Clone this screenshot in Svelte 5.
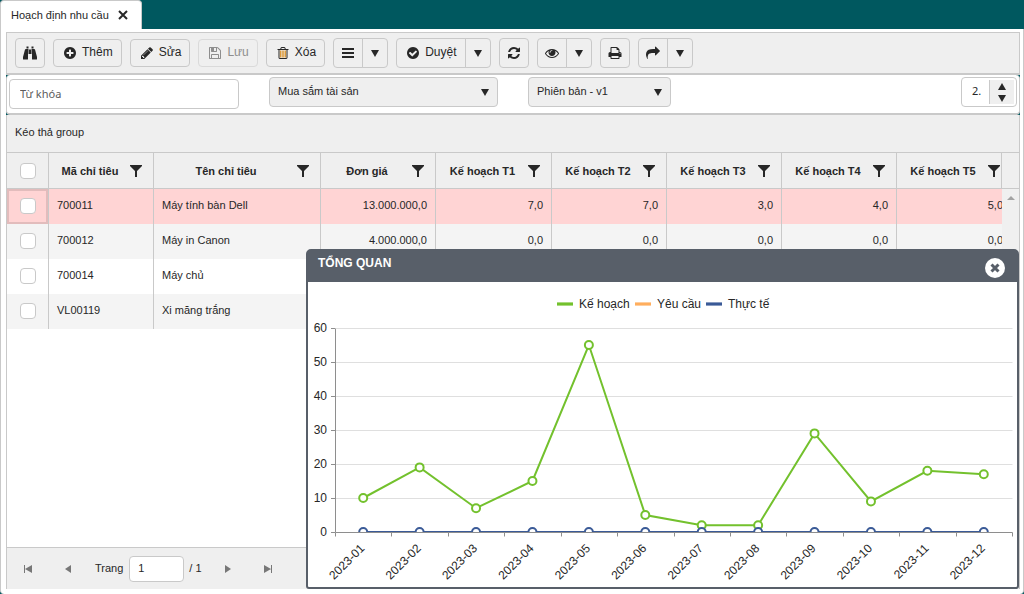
<script lang="ts">
  const icons: Record<string, string> = {
    plus: "M1344 960v-128q0-26-19-45t-45-19h-256v-256q0-26-19-45t-45-19h-128q-26 0-45 19t-19 45v256h-256q-26 0-45 19t-19 45v128q0 26 19 45t45 19h256v256q0 26 19 45t45 19h128q26 0 45-19t19-45v-256h256q26 0 45-19t19-45zm320-64q0 209-103 385.5t-279.5 279.5-385.5 103-385.5-103-279.5-279.5-103-385.5 103-385.5 279.5-279.5 385.5-103 385.5 103 279.5 279.5 103 385.5z",
    check: "M1412 734q0-28-18-46l-91-90q-19-19-45-19t-45 19l-408 407-226-226q-19-19-45-19t-45 19l-91 90q-18 18-18 46 0 27 18 45l362 362q19 19 45 19 27 0 46-19l543-543q18-18 18-45zm252 162q0 209-103 385.5t-279.5 279.5-385.5 103-385.5-103-279.5-279.5-103-385.5 103-385.5 279.5-279.5 385.5-103 385.5 103 279.5 279.5 103 385.5z",
    pencil: "M491 1536l91-91-235-235-91 91v107h128v128h107zm523-928q0-22-22-22-10 0-17 7l-542 542q-7 7-7 17 0 22 22 22 10 0 17-7l542-542q7-7 7-17zm-54-192l416 416-832 832h-416v-416zm683 96q0 53-37 90l-166 166-416-416 166-165q36-38 90-38 53 0 91 38l235 234q37 39 37 91z",
    save: "M512 1536h768v-384h-768v384zm896 0h128v-896q0-14-10-38.5t-20-34.5l-281-281q-10-10-34-20t-39-10v416q0 40-28 68t-68 28h-576q-40 0-68-28t-28-68v-416h-128v1280h128v-416q0-40 28-68t68-28h832q40 0 68 28t28 68v416zm-384-928v-320q0-13-9.5-22.5t-22.5-9.5h-192q-13 0-22.5 9.5t-9.5 22.5v320q0 13 9.5 22.5t22.5 9.5h192q13 0 22.5-9.5t9.5-22.5zm640 32v928q0 40-28 68t-68 28h-1344q-40 0-68-28t-28-68v-1344q0-40 28-68t68-28h928q40 0 88 20t76 48l280 280q28 28 48 76t20 88z",
    trash: "M1344 1460v-948h-896v948q0 22 7 40.5t14.5 27 10.5 8.5h832q3 0 10.5-8.5t14.5-27 7-40.5zm-672-1076h448l-48-117q-7-9-17-11h-317q-10 2-17 11zm928 32v64q0 14-9 23t-23 9h-96v948q0 83-47 143.5t-113 60.5h-832q-66 0-113-58.5t-47-141.5v-952h-96q-14 0-23-9t-9-23v-64q0-14 9-23t23-9h309l70-167q15-37 54-63t79-26h320q40 0 79 26t54 63l70 167h309q14 0 23 9t9 23z",
    bars: "M128 256h1536v256h-1536zM128 768h1536v256h-1536zM128 1280h1536v256h-1536z",
    refresh: "M1639 1056q0 5-1 7-64 268-268 434.5t-478 166.5q-146 0-282.5-55t-243.5-157l-129 129q-19 19-45 19t-45-19-19-45v-448q0-26 19-45t45-19h448q26 0 45 19t19 45-19 45l-137 137q71 66 161 102t187 36q134 0 250-65t186-179q11-17 53-117 8-23 30-23h192q13 0 22.5 9.5t9.5 22.5zm25-800v448q0 26-19 45t-45 19h-448q-26 0-45-19t-19-45 19-45l138-138q-148-137-349-137-134 0-250 65t-186 179q-11 17-53 117-8 23-30 23h-199q-13 0-22.5-9.5t-9.5-22.5v-7q65-268 270-434.5t480-166.5q146 0 284 55.5t245 156.5l130-129q19-19 45-19t45 19 19 45z",
    eye: "M1664 960q-152-236-381-353 61 104 61 225 0 185-131.5 316.5t-316.5 131.5-316.5-131.5-131.5-316.5q0-121 61-225-229 117-381 353 133 205 333.5 326.5t434.5 121.5 434.5-121.5 333.5-326.5zm-720-384q0-20-14-34t-34-14q-125 0-214.5 89.5t-89.5 214.5q0 20 14 34t34 14 34-14 14-34q0-86 61-147t147-61q20 0 34-14t14-34zm848 384q0 34-20 69-140 230-376.5 368.5t-499.5 138.5-499.5-139-376.5-368q-20-35-20-69t20-69q140-229 376.5-368t499.5-139 499.5 139 376.5 368q20 35 20 69z",
    print: "M448 1536h896v-256h-896v256zm0-640h896v-384h-160q-40 0-68-28t-28-68v-160h-640v640zm1152 64q0-26-19-45t-45-19-45 19-19 45 19 45 45 19 45-19 19-45zm128 0v416q0 13-9.5 22.5t-22.5 9.5h-224v160q0 40-28 68t-68 28h-960q-40 0-68-28t-28-68v-160h-224q-13 0-22.5-9.5t-9.5-22.5v-416q0-79 56.5-135.5t135.5-56.5h64v-544q0-40 28-68t68-28h672q40 0 88 20t76 48l152 152q28 28 48 76t20 88v256h64q79 0 135.5 56.5t56.5 135.5z",
    share: "M1792 640q0 26-19 45l-512 512q-19 19-45 19t-45-19-19-45v-256h-224q-98 0-175.5 6t-154 21.5-133 42.5-105.5 69.5-80 101-48.5 138.5-17.5 181q0 55 5 123 0 6 2.5 23.5t2.5 26.5q0 15-8.5 25t-23.5 10q-16 0-28-17-7-9-13-22t-13.5-30-10.5-24q-127-285-127-451 0-199 53-333 162-403 875-403h224v-256q0-26 19-45t45-19 45 19l512 512q19 19 19 45z",
    search: "M384 384h320v640h-64v640q0 64-64 64H64q-64 0-64-64v-256l256-960q16-64 128-64zM1088 384h320q112 0 128 64l256 960v256q0 64-64 64h-512q-64 0-64-64v-640h-64zM768 448h256v576h-256zM448 64h256v256h-256zM1088 64h256v256h-256z",
  };

  const tools = [
    { icon: "search", title: "Tìm kiếm" },
    { icon: "plus", text: "Thêm" },
    { icon: "pencil", text: "Sửa" },
    { icon: "save", text: "Lưu", disabled: true },
    { icon: "trash", text: "Xóa" },
    { icon: "bars", title: "Danh mục", menu: true },
    { icon: "check", text: "Duyệt", menu: true },
    { icon: "refresh", title: "Làm mới" },
    { icon: "eye", title: "Xem", menu: true },
    { icon: "print", title: "In" },
    { icon: "share", title: "Chia sẻ", menu: true },
  ];

  const columns = [
    { title: "Mã chỉ tiêu", width: 105 },
    { title: "Tên chỉ tiêu", width: 167 },
    { title: "Đơn giá", width: 115 },
    { title: "Kế hoạch T1", width: 116 },
    { title: "Kế hoạch T2", width: 115 },
    { title: "Kế hoạch T3", width: 115 },
    { title: "Kế hoạch T4", width: 115 },
    { title: "Kế hoạch T5", width: 115 },
  ];

  const rows = [
    ["700011", "Máy tính bàn Dell", "13.000.000,0", "7,0", "7,0", "3,0", "4,0", "5,0"],
    ["700012", "Máy in Canon", "4.000.000,0", "0,0", "0,0", "0,0", "0,0", "0,0"],
    ["700014", "Máy chủ"],
    ["VL00119", "Xi măng trắng"],
  ];

  let selected = $state(0);
  let showChart = $state(true);

  // chart geometry
  const left = 27.5;
  const base = 250.5;
  const plotW = 677;
  const step = plotW / 12;
  const plan = [10, 19, 7, 15, 55, 5, 2, 2, 29, 9, 18, 17];
  const actual = Array(12).fill(0);

  const px = (i: number) => 27 + step * (i + 0.5);
  const py = (v: number) => 250 - v * 3.4;
  const gridY = (v: number) => base - v * 3.4;
  const line = (data: number[]) => data.map((v, i) => `${px(i)},${py(v)}`).join(" ");
  const month = (i: number) => `2023-${String(i + 1).padStart(2, "0")}`;

  const legend = [
    { name: "Kế hoạch", color: "#73c12d", x: 249 },
    { name: "Yêu cầu", color: "#ffae5d", x: 327 },
    { name: "Thực tế", color: "#3a5a97", x: 398 },
  ];
</script>

{#snippet icon(name: string)}
  <svg class="icon" viewBox="0 0 1792 1792" aria-hidden="true">
    <path d={icons[name]} />
    {#if name === "trash"}
      <path class="slats" d="M500 560h200v920h-200zM796 560h200v920h-200zM1092 560h200v920h-200z" />
    {/if}
  </svg>
{/snippet}

{#snippet caret()}
  <svg class="caret" viewBox="0 0 8 7" aria-hidden="true"><path d="M0 0h8L4 7z" /></svg>
{/snippet}

<div class="app">
  <nav class="tabs">
    <div class="tab">
      <span>Hoạch định nhu cầu</span>
      <button class="tab-close" aria-label="Đóng tab">
        <svg viewBox="0 0 10 10"><path d="M1 1l8 8M9 1l-8 8" /></svg>
      </button>
    </div>
  </nav>

  <main class="panel">
    <div class="toolbar">
      {#each tools as tool}
        <div class="group">
          <button class="tool" class:labelled={tool.text} disabled={tool.disabled} aria-label={tool.title}>
            {@render icon(tool.icon)}
            {#if tool.text}<span>{tool.text}</span>{/if}
          </button>
          {#if tool.menu}
            <button class="tool drop" aria-label="Mở rộng">{@render caret()}</button>
          {/if}
        </div>
      {/each}
    </div>

    <div class="filters-wrap">
      <div class="filters">
        <input class="keyword" type="text" placeholder="Từ khóa" aria-label="Từ khóa" />
        <div class="select kind">
          <select aria-label="Loại kế hoạch"><option>Mua sắm tài sản</option></select>
          {@render caret()}
        </div>
        <div class="select version">
          <select aria-label="Phiên bản"><option>Phiên bản - v1</option></select>
          {@render caret()}
        </div>
        <div class="year">
          <input type="text" value="2.023" aria-label="Năm" />
          <div class="spin">
            <button aria-label="Tăng"><svg viewBox="0 0 8 7"><path d="M0 7h8L4 0z" /></svg></button>
            <button aria-label="Giảm"><svg viewBox="0 0 8 7"><path d="M0 0h8L4 7z" /></svg></button>
          </div>
        </div>
      </div>
    </div>

    <section class="grid">
      <div class="group-header">Kéo thả group</div>
      <div class="grid-body">
        <div class="table-wrap">
          <table>
            <colgroup>
              <col class="check-col" />
              {#each columns as col}
                <col style:width="{col.width}px" />
              {/each}
            </colgroup>
            <thead>
              <tr>
                <th class="check"><input type="checkbox" aria-label="Chọn tất cả" /></th>
                {#each columns as col}
                  <th>
                    <div class="head">
                      <span>{col.title}</span>
                      <button class="filter" aria-label="Lọc {col.title}">
                        <svg viewBox="0 0 12 12"><path d="M0 0h12v1L7 6v6H5V6L0 1z" /></svg>
                      </button>
                    </div>
                  </th>
                {/each}
              </tr>
            </thead>
            <tbody>
              {#each rows as row, i}
                <tr class:selected={selected === i} onclick={() => (selected = i)}>
                  <td class="check"><input type="checkbox" aria-label="Chọn {row[0]}" /></td>
                  {#each columns as _, c}
                    <td class:num={c > 1}>{row[c] ?? ""}</td>
                  {/each}
                </tr>
              {/each}
            </tbody>
          </table>
        </div>
        <div class="side">
          <div class="side-head"></div>
          <div class="scrollbar">
            <svg viewBox="0 0 8 4"><path d="M0 4h8L4 0z" /></svg>
          </div>
        </div>
      </div>
      <div class="pager">
        <button aria-label="Trang đầu"><svg viewBox="0 0 8 8"><path d="M0 0h1v8H0zM8 0v8L1 4z" /></svg></button>
        <button aria-label="Trang trước"><svg viewBox="0 0 8 8"><path d="M7 0v8L1 4z" /></svg></button>
        <label for="page">Trang</label>
        <input id="page" type="text" value="1" />
        <span>/ 1</span>
        <button aria-label="Trang sau"><svg viewBox="0 0 8 8"><path d="M1 0v8l6-4z" /></svg></button>
        <button aria-label="Trang cuối"><svg viewBox="0 0 8 8"><path d="M7 0h1v8H7zM0 0v8l7-4z" /></svg></button>
      </div>
    </section>
  </main>

  {#if showChart}
    <section class="window" aria-label="Tổng quan">
      <header>
        <h2>TỔNG QUAN</h2>
        <button class="close" aria-label="Đóng" onclick={() => (showChart = false)}>
          <svg viewBox="0 0 20 20">
            <circle cx="10" cy="10" r="10" />
            <path d="M6.5 6.5l7 7M13.5 6.5l-7 7" />
          </svg>
        </button>
      </header>
      <svg class="chart" viewBox="0 0 709 305" role="img" aria-label="Biểu đồ kế hoạch">
        <defs>
          <clipPath id="plot"><rect x="27" y="0" width="680" height="251" /></clipPath>
        </defs>

        {#each legend as item}
          <rect x={item.x} y="20" width="16" height="4" fill={item.color} opacity="0.6" />
          <rect x={item.x} y="21" width="16" height="2" fill={item.color} />
          <text x={item.x + 22} y="26">{item.name}</text>
        {/each}

        {#each [0, 10, 20, 30, 40, 50, 60] as v}
          {#if v > 0}
            <path class="gridline" d="M{left} {gridY(v)}h{plotW}" />
          {/if}
          <path class="axis" d="M23 {gridY(v)}h4" />
          <text x="19" y={py(v) + 4} text-anchor="end">{v}</text>
        {/each}

        <path class="axis" d="M{left} {gridY(60)}V{base}" />

        <g clip-path="url(#plot)">
          <polyline points={line(plan)} stroke="#73c12d" />
          {#each plan as v, i}
            <circle cx={px(i)} cy={py(v)} r="4" stroke="#73c12d" />
          {/each}
          <polyline points={line(actual)} stroke="#3a5a97" />
          {#each actual as v, i}
            <circle cx={px(i)} cy={py(v)} r="4" stroke="#3a5a97" />
          {/each}
        </g>

        <path class="axis" d="M{left} {base}h{plotW}" />
        {#each Array(13) as _, i}
          <path class="axis" d="M{Math.floor(left + step * i) + 0.5} {base}v4" />
        {/each}
        {#each plan as _, i}
          <text text-anchor="end" transform="translate({px(i) + 2} 267) rotate(-45)">{month(i)}</text>
        {/each}
      </svg>
    </section>
  {/if}
</div>

<style>
  :global(body) {
    margin: 0;
    background: #00585f;
  }

  .app {
    --line: #c9c9c9;
    --bg: #efefef;
    position: relative;
    display: flex;
    flex-direction: column;
    min-height: 100vh;
    font: 11px/16px "Liberation Sans", Arial, sans-serif;
    color: #272727;
    background: #00585f;
  }

  .app * {
    box-sizing: border-box;
  }

  button,
  input,
  select {
    font: inherit;
    color: inherit;
    margin: 0;
  }

  button {
    padding: 0;
    border: 0;
    background: none;
  }

  svg {
    display: block;
    fill: currentColor;
  }

  .tabs {
    display: flex;
    height: 29px;
  }

  .tab {
    display: flex;
    align-items: center;
    gap: 9px;
    padding: 0 13px 0 10px;
    border: 1px solid var(--line);
    border-bottom: 0;
    border-radius: 4px 4px 0 0;
    background: #fff;
  }

  .tab-close svg {
    width: 10px;
    height: 10px;
    fill: none;
    stroke: currentColor;
    stroke-width: 2;
  }

  .panel {
    flex: 1;
    display: flex;
    flex-direction: column;
    padding: 3px 3px 5px 5px;
    border: solid var(--line);
    border-width: 0 1px;
    border-radius: 0 0 4px 4px;
    background: #fff;
  }

  .toolbar {
    display: flex;
    align-items: center;
    gap: 8px;
    height: 43px;
    padding: 0 8px;
    border: 1px solid var(--line);
    border-bottom-width: 2px;
    background: var(--bg);
    font-size: 12px;
  }

  .group {
    display: flex;
  }

  .tool {
    display: flex;
    align-items: center;
    justify-content: center;
    gap: 5px;
    width: 30px;
    height: 30px;
    border: 1px solid var(--line);
    border-radius: 4px;
  }

  .tool.labelled {
    width: auto;
    height: 28px;
    padding: 0 8px 0 9px;
  }

  .tool.labelled span {
    padding-bottom: 2px;
  }

  .tool:disabled {
    color: #8e8e8e;
    border-color: #dadada;
  }

  .tool:not(:last-child) {
    height: 30px;
    border-radius: 4px 0 0 4px;
  }

  .tool.drop {
    width: 26px;
    margin-left: -1px;
    border-radius: 0 4px 4px 0;
  }

  .icon {
    width: 14px;
    height: 14px;
  }

  .slats {
    fill: #dc9a3c;
  }

  .caret {
    width: 8px;
    height: 7px;
  }

  .filters-wrap {
    background: #00585f;
  }

  .filters {
    display: flex;
    align-items: flex-start;
    height: 40px;
    padding: 2px;
    border: 1px solid var(--line);
    border-width: 0 1px 2px;
    border-radius: 4px;
    background: #fff;
  }

  .keyword {
    width: 230px;
    height: 30px;
    margin-top: 2px;
    padding: 0 10px 2px;
    border: 1px solid var(--line);
    border-radius: 4px;
    background: #fff;
    font-family: "Noto Sans", sans-serif;
  }

  .keyword::placeholder {
    color: #5c5c5c;
    opacity: 1;
  }

  .select {
    position: relative;
    margin-left: 30px;
  }

  .select select {
    width: 100%;
    height: 30px;
    padding: 0 8px 2px;
    appearance: none;
    border: 1px solid var(--line);
    border-radius: 4px;
    background: var(--bg);
  }

  .select .caret {
    position: absolute;
    top: 12px;
    right: 9px;
    pointer-events: none;
  }

  .kind {
    width: 229px;
  }

  .version {
    width: 143px;
  }

  .year {
    display: flex;
    justify-content: space-between;
    width: 56px;
    height: 30px;
    margin-left: auto;
    padding: 2px 2px 2px 10px;
    border: 1px solid var(--line);
    border-radius: 4px;
    font-family: "Noto Sans", sans-serif;
  }

  .year input {
    width: 9px;
    padding: 0 0 2px;
    border: 0;
    outline: 0;
  }

  .spin {
    display: flex;
    flex-direction: column;
    align-items: center;
    justify-content: center;
    gap: 5px;
    width: 25px;
    border-left: 1px solid var(--line);
    background: var(--bg);
  }

  .spin svg {
    width: 8px;
    height: 7px;
  }

  .grid {
    flex: 1;
    display: flex;
    flex-direction: column;
    border: solid var(--line);
    border-width: 0 1px;
  }

  .group-header {
    padding: 9px 8px 12px;
    border-bottom: 1px solid var(--line);
    background: var(--bg);
  }

  .grid-body {
    flex: 1;
    display: flex;
  }

  .table-wrap {
    flex: 1;
    min-width: 0;
    overflow: hidden;
  }

  table {
    width: 1005px;
    table-layout: fixed;
    border-collapse: separate;
    border-spacing: 0;
  }

  .check-col {
    width: 42px;
  }

  th,
  td {
    height: 35px;
    padding: 0 8px 4px;
    border-right: 1px solid var(--line);
    white-space: nowrap;
  }

  th,
  th.check {
    height: 36px;
    padding: 0;
    border-bottom: 1px solid var(--line);
    background: var(--bg);
  }

  tbody tr:nth-child(even) {
    background: #f4f4f4;
  }

  tbody tr.selected {
    background: #ffd4d4;
  }

  .selected .check {
    box-shadow: inset 0 0 0 2px #e2bcbc;
  }

  .num {
    text-align: right;
  }

  .check {
    padding: 0 0 2px;
    text-align: center;
  }

  .check input {
    width: 16px;
    height: 16px;
    appearance: none;
    border: 1px solid var(--line);
    border-radius: 4px;
    background: #fff;
    vertical-align: middle;
  }

  .head {
    display: flex;
    align-items: center;
    padding: 0 11px 0 1px;
  }

  .head span {
    flex: 1;
  }

  .filter svg {
    width: 12px;
    height: 12px;
  }

  .side {
    display: flex;
    flex-direction: column;
    width: 17px;
  }

  .side-head {
    height: 36px;
    margin-left: -1px;
    border-left: 1px solid var(--line);
    border-bottom: 1px solid var(--line);
    background: var(--bg);
    z-index: 1;
  }

  .scrollbar {
    flex: 1;
    padding-top: 7px;
    background: #f0f0f0;
    color: #a3a3a3;
  }

  .scrollbar svg {
    width: 8px;
    height: 4px;
    margin: 0 auto;
  }

  .pager {
    display: flex;
    align-items: center;
    height: 42px;
    padding: 0 5px;
    border-top: 1px solid var(--line);
    background: var(--bg);
  }

  .pager button {
    display: flex;
    justify-content: center;
    width: 40px;
    color: #777;
  }

  .pager button:first-child {
    width: 32px;
    margin-right: 4px;
  }

  .pager svg {
    width: 8px;
    height: 8px;
  }

  .pager label {
    margin: 0 6px 0 7px;
  }

  .pager label,
  .pager span {
    padding-bottom: 2px;
  }

  .pager input {
    width: 55px;
    height: 26px;
    padding: 0 8px 2px;
    border: 1px solid var(--line);
    border-radius: 4px;
    background: #fff;
  }

  .pager span {
    margin: 0 6px 0 5px;
  }

  .window {
    position: absolute;
    top: 249px;
    right: 5px;
    left: 306px;
    border: 2px solid #585f69;
    border-radius: 5px 5px 3px 3px;
    background: #fff;
    z-index: 2;
  }

  .window header {
    display: flex;
    justify-content: space-between;
    height: 31px;
    padding: 4px 12px 0 10px;
    background: #585f69;
    color: #fff;
  }

  h2 {
    margin: 0;
    font-size: 12px;
    line-height: 16px;
  }

  .close {
    height: 20px;
    margin-top: 3px;
  }

  .close svg {
    width: 20px;
    height: 20px;
  }

  .close path {
    stroke: #585f69;
    stroke-width: 3;
  }

  .chart {
    width: 100%;
    font-size: 12px;
  }

  .gridline {
    stroke: #dfdfdf;
  }

  .axis {
    stroke: #8e8e8e;
  }

  .chart polyline {
    fill: none;
    stroke-width: 2;
  }

  .chart circle {
    fill: #fff;
    stroke-width: 2;
  }
</style>
